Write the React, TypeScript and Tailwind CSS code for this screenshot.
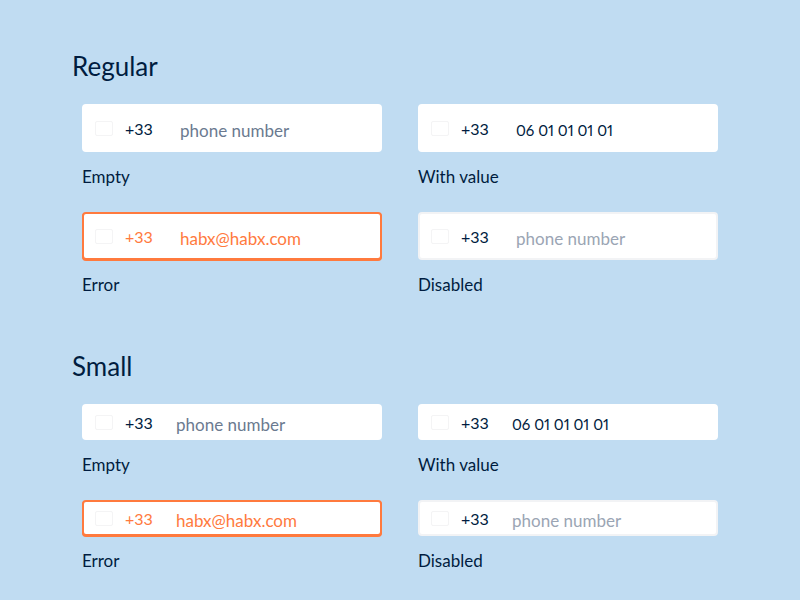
import { useId } from "react";
import { clsx } from "clsx";

type Size = "regular" | "small";

interface PhoneFieldProps {
  label: string;
  size: Size;
  value?: string;
  error?: boolean;
  disabled?: boolean;
}

function PhoneField({ label, size, value, error, disabled }: PhoneFieldProps) {
  const id = useId();
  const numeric = value !== undefined && !error;
  return (
    <div className="flex min-w-0 flex-col gap-[13px]">
      <div
        className={clsx(
          "flex items-stretch rounded border-2 bg-white",
          size === "regular" ? "h-12" : "h-9",
          error ? "border-[#ff7a3e] text-[#ff7a3e] shadow-[0_1px_0_#ff7a3e]" : "text-[#001c40]",
          !error && (disabled ? "border-[#f2f3f5]" : "border-white"),
        )}
      >
        <button
          type="button"
          aria-label="Country code +33"
          disabled={disabled}
          className={clsx(
            "flex shrink-0 items-center gap-3 pl-[11px] text-left",
            size === "regular" ? "w-24" : "w-[92px]",
          )}
        >
          <span className="h-[15px] w-[18px] rounded-xs border border-[#f4f4f5]" />
          <span className="pt-0.5">+33</span>
        </button>
        <input
          id={id}
          type="tel"
          defaultValue={value}
          placeholder="phone number"
          disabled={disabled}
          aria-invalid={error}
          className={clsx(
            "min-w-0 flex-1 bg-transparent pt-[5px] proportional-nums outline-none",
            numeric ? "text-[15px]" : "text-[17px]",
            disabled ? "placeholder:text-[#9ba5b4]" : "placeholder:text-[#6b7a90]",
          )}
        />
      </div>
      <label htmlFor={id} className="text-[17px] leading-6">
        {label}
      </label>
    </div>
  );
}

function FieldSection({ title, size }: { title: string; size: Size }) {
  return (
    <section>
      <h2 className="text-[26px] leading-8">{title}</h2>
      <div className="mt-[22px] grid grid-cols-2 gap-x-9 gap-y-[23px] px-2.5">
        <PhoneField label="Empty" size={size} />
        <PhoneField label="With value" size={size} value="06 01 01 01 01" />
        <PhoneField label="Error" size={size} value="habx@habx.com" error />
        <PhoneField label="Disabled" size={size} disabled />
      </div>
    </section>
  );
}

export default function App() {
  return (
    <main className="flex min-h-screen flex-col gap-[53px] bg-[#c0dcf2] px-[72px] pt-[50px] pb-6 font-[Lato,sans-serif] text-[#001c40]">
      <FieldSection title="Regular" size="regular" />
      <FieldSection title="Small" size="small" />
    </main>
  );
}
